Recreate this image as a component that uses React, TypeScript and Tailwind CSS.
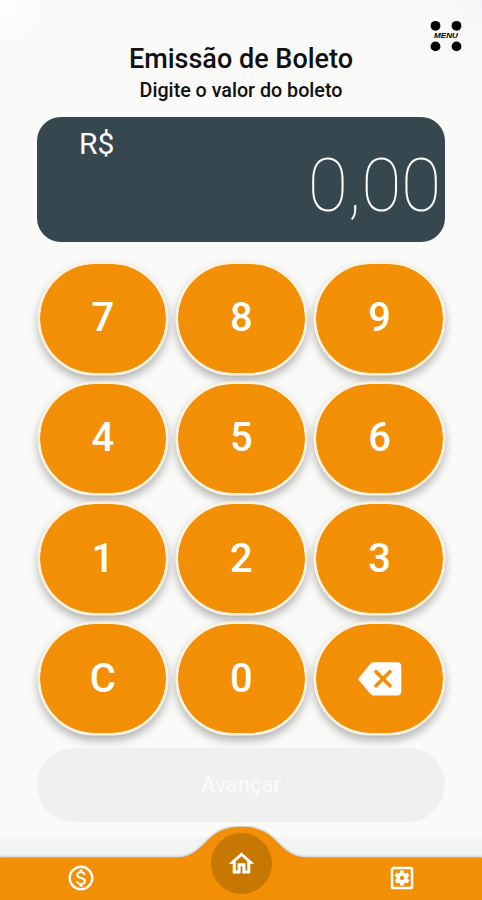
import { useState, type ReactNode } from 'react'
import { MdOutlineMonetizationOn, MdOutlineSettingsApplications } from 'react-icons/md'

const keys = ['7', '8', '9', '4', '5', '6', '1', '2', '3', 'C', '0', 'back']

function BackspaceIcon() {
    return (
        <svg width="44" height="34" viewBox="0 0 44 34" aria-hidden="true">
            <path
                d="M12.6 1.6C13.4.5 14 .3 15.2.3H39.6c2.2 0 3.7 1.5 3.7 3.7V29.7c0 2.2-1.5 3.7-3.7 3.7H15.2c-1.2 0-1.9-.4-2.6-1.4L.9 18.2c-.6-.8-.6-1.7 0-2.5z"
                fill="#fff"
            />
            <path d="M18 9.8l14 14M32 9.8l-14 14" stroke="#f28f05" strokeWidth="3.7" strokeLinecap="round" />
        </svg>
    )
}

function HomeIcon() {
    return (
        <svg width="29" height="29" viewBox="0 0 24 24" fill="#fff" stroke="#fff" strokeWidth="0.5" aria-hidden="true">
            <path d="M12 5.69l5 4.5V18h-2v-6H9v6H7v-7.81l5-4.5M12 3L2 12h3v8h6v-6h2v6h6v-8h3L12 3z" />
        </svg>
    )
}

function Key({ label, onClick }: { label: ReactNode; onClick: () => void }) {
    return (
        <button
            onClick={onClick}
            className="flex h-[113px] items-center justify-center rounded-[57px] border-2 border-[#fdf1df] bg-[#f28f05] bg-clip-padding text-[40px] leading-none font-medium text-white shadow-[0_0_0_0.5px_#fdf5ea,0_5px_10px_rgba(0,0,0,0.3)]"
        >
            {label}
        </button>
    )
}

function MenuButton() {
    return (
        <button className="absolute top-5 right-5 h-8 w-8" aria-label="Menu">
            <svg width="32" height="32" viewBox="0 0 32 32" aria-hidden="true">
                <circle cx="5.5" cy="5.8" r="4.9" />
                <circle cx="26.5" cy="5.8" r="4.9" />
                <circle cx="5.5" cy="26.4" r="4.9" />
                <circle cx="26.5" cy="26.4" r="4.9" />
                <text
                    x="16"
                    y="18.2"
                    textAnchor="middle"
                    textLength="24"
                    lengthAdjust="spacingAndGlyphs"
                    fontSize="7"
                    fontWeight="700"
                    fontStyle="italic"
                    fontFamily="Liberation Sans, sans-serif"
                >
                    MENU
                </text>
            </svg>
        </button>
    )
}

function BottomBar() {
    return (
        <nav className="relative h-[63px] bg-[#f2f4f6] text-white">
            <svg className="absolute -top-[11px] left-0" width="482" height="74" viewBox="0 0 482 74" aria-hidden="true">
                <path
                    d="M0 31.5H178C192 31.5 201 21 209 13C217 5 228 .8 241.5 .8S266 5 274 13C282 21 291 31.5 306 31.5H482V74H0z"
                    fill="#f28f05"
                    className="drop-shadow-[0_-1px_1px_rgba(0,0,0,0.22)]"
                />
            </svg>
            <div className="relative flex h-full items-end justify-between px-[65.5px]">
                <a className="pb-[7px]">
                    <MdOutlineMonetizationOn size={30} />
                </a>
                <a className="mb-1.5 flex h-[61px] w-[61px] items-center justify-center rounded-full bg-[#c67803]">
                    <HomeIcon />
                </a>
                <a className="pb-[7px]">
                    <MdOutlineSettingsApplications size={30} />
                </a>
            </div>
        </nav>
    )
}

export default function App() {
    const [cents, setCents] = useState(0)

    const press = (key: string) => {
        if (key === 'C') setCents(0)
        else if (key === 'back') setCents(Math.floor(cents / 10))
        else if (cents < 100000) setCents(cents * 10 + Number(key))
    }

    return (
        <div className="relative flex h-[900px] w-[482px] flex-col overflow-hidden bg-[#fafaf8] bg-[radial-gradient(circle_at_0_0,#ffffff_0,transparent_46px),radial-gradient(circle_at_100%_0,#f4f5f8_0,#f6f7f9_20px,transparent_50px)] font-[Roboto,sans-serif] text-[#111]">
            <MenuButton />
            <main className="flex flex-1 flex-col px-[37px] pt-[43px]">
                <h1 className="text-center text-[27px] leading-8 font-medium whitespace-nowrap">Emissão de Boleto</h1>
                <p className="mt-1 text-center text-[19.7px] leading-6 font-medium whitespace-nowrap">Digite o valor do boleto</p>

                <div className="mt-[14px] flex h-[125px] shrink-0 justify-between rounded-[24px] bg-[#36474f] pr-1 pl-[42px] text-white">
                    <span className="pt-[9px] text-[30px] leading-9">R$</span>
                    <span className="pt-[25px] text-[73.5px] leading-[88px] font-[150] tracking-[-0.3px]">
                        {(cents / 100).toFixed(2).replace('.', ',')}
                    </span>
                </div>

                <div className="mt-[19.5px] ml-[0.5px] grid shrink-0 grid-cols-3 gap-x-[7.5px] gap-y-[7.3px]">
                    {keys.map(key => (
                        <Key key={key} label={key === 'back' ? <BackspaceIcon /> : key} onClick={() => press(key)} />
                    ))}
                </div>

                <button className="mt-[12.6px] h-[74px] shrink-0 rounded-[37px] bg-[#eeeeec]/90 text-[22px] font-medium text-[#fafaf9]">
                    Avançar
                </button>
            </main>
            <BottomBar />
        </div>
    )
}
